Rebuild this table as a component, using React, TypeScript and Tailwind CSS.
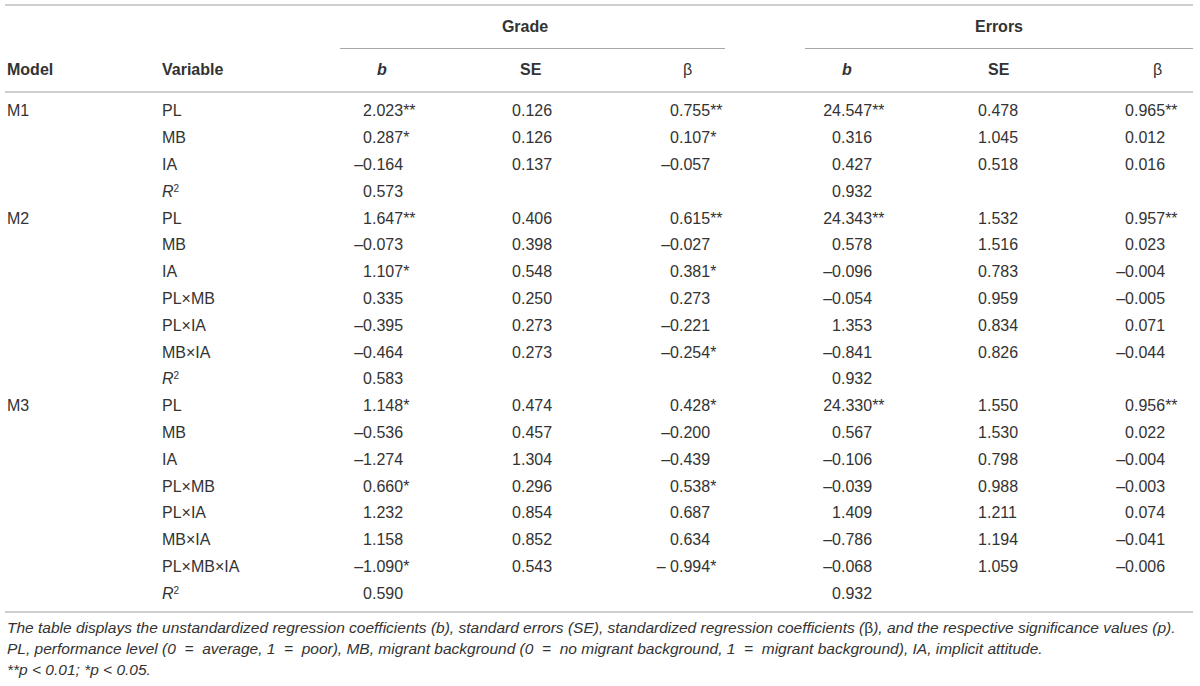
import React from 'react';

type Row = { model?: string; variable: React.ReactNode; g: string[]; e: string[] };

const R2 = (
  <span>
    <i>R</i>
    <sup className="text-[10px]">2</sup>
  </span>
);

const rows: Row[] = [
  { model: 'M1', variable: 'PL', g: ['2.023**', '0.126', '0.755**'], e: ['24.547**', '0.478', '0.965**'] },
  { variable: 'MB', g: ['0.287*', '0.126', '0.107*'], e: ['0.316', '1.045', '0.012'] },
  { variable: 'IA', g: ['–0.164', '0.137', '–0.057'], e: ['0.427', '0.518', '0.016'] },
  { variable: R2, g: ['0.573', '', ''], e: ['0.932', '', ''] },
  { model: 'M2', variable: 'PL', g: ['1.647**', '0.406', '0.615**'], e: ['24.343**', '1.532', '0.957**'] },
  { variable: 'MB', g: ['–0.073', '0.398', '–0.027'], e: ['0.578', '1.516', '0.023'] },
  { variable: 'IA', g: ['1.107*', '0.548', '0.381*'], e: ['–0.096', '0.783', '–0.004'] },
  { variable: 'PL×MB', g: ['0.335', '0.250', '0.273'], e: ['–0.054', '0.959', '–0.005'] },
  { variable: 'PL×IA', g: ['–0.395', '0.273', '–0.221'], e: ['1.353', '0.834', '0.071'] },
  { variable: 'MB×IA', g: ['–0.464', '0.273', '–0.254*'], e: ['–0.841', '0.826', '–0.044'] },
  { variable: R2, g: ['0.583', '', ''], e: ['0.932', '', ''] },
  { model: 'M3', variable: 'PL', g: ['1.148*', '0.474', '0.428*'], e: ['24.330**', '1.550', '0.956**'] },
  { variable: 'MB', g: ['–0.536', '0.457', '–0.200'], e: ['0.567', '1.530', '0.022'] },
  { variable: 'IA', g: ['–1.274', '1.304', '–0.439'], e: ['–0.106', '0.798', '–0.004'] },
  { variable: 'PL×MB', g: ['0.660*', '0.296', '0.538*'], e: ['–0.039', '0.988', '–0.003'] },
  { variable: 'PL×IA', g: ['1.232', '0.854', '0.687'], e: ['1.409', '1.211', '0.074'] },
  { variable: 'MB×IA', g: ['1.158', '0.852', '0.634'], e: ['–0.786', '1.194', '–0.041'] },
  { variable: 'PL×MB×IA', g: ['–1.090*', '0.543', '– 0.994*'], e: ['–0.068', '1.059', '–0.006'] },
  { variable: R2, g: ['0.590', '', ''], e: ['0.932', '', ''] },
];

const grid = 'grid grid-cols-[150px_185px_110px_150px_125px_80px_110px_150px_128px]';

// decimal-aligned number: integer part sits in a fixed right-aligned box
function Num({ v, w }: { v: string; w: string }) {
  if (!v) return <div />;
  const i = v.indexOf('.');
  return (
    <div className="flex items-center whitespace-pre">
      <span className={`${w} text-right`}>{v.slice(0, i)}</span>
      <span>{v.slice(i)}</span>
    </div>
  );
}

export default function App() {
  return (
    <div
      className="bg-white text-[#333] px-[5px] pt-[4px]"
      style={{ fontFamily: '"Liberation Sans", Arial, sans-serif' }}
    >
      <div className="w-[1188px] border-t-2 border-[#cfcfcf] text-[16px]">
        {/* group headers */}
        <div className={`${grid} h-[43px] font-bold`}>
          <div className="col-start-3 col-span-3 border-b border-[#a8a8a8] flex items-center justify-center pr-[15px]">
            Grade
          </div>
          <div className="col-start-7 col-span-3 border-b border-[#a8a8a8] flex items-center justify-center">
            Errors
          </div>
        </div>

        {/* column headers */}
        <div className={`${grid} h-[44px] items-center font-bold border-b-2 border-[#cfcfcf]`}>
          <div className="pl-[2px]">Model</div>
          <div className="pl-[7px]">Variable</div>
          <div className="pl-[37px] italic">b</div>
          <div className="pl-[70px]">SE</div>
          <div className="pl-[83px] font-normal">β</div>
          <div />
          <div className="pl-[37px] italic">b</div>
          <div className="pl-[73px]">SE</div>
          <div className="pl-[88px] font-normal">β</div>
        </div>

        {/* body */}
        <div className="pt-[5px] pb-[4px] border-b-2 border-[#cfcfcf]">
          {rows.map((r, k) => (
            <div key={k} className={`${grid} h-[26.8px] items-center`}>
              <div className="pl-[2px]">{r.model ?? ''}</div>
              <div className="pl-[7px]">{r.variable}</div>
              <Num v={r.g[0]} w="w-[32px]" />
              <Num v={r.g[1]} w="w-[71px]" />
              <Num v={r.g[2]} w="w-[79px]" />
              <div />
              <Num v={r.e[0]} w="w-[36px]" />
              <Num v={r.e[1]} w="w-[72px]" />
              <Num v={r.e[2]} w="w-[69px]" />
            </div>
          ))}
        </div>

        {/* note */}
        <div className="pt-[4px] italic text-[15.5px] leading-[21px] pl-[2px]">
          <p>
            The table displays the unstandardized regression coefficients (b), standard errors (SE), standardized
            regression coefficients (<span className="not-italic">β</span>), and the respective significance values (p).
          </p>
          <p>
            PL, performance level (0&nbsp; = &nbsp;average, 1&nbsp; = &nbsp;poor), MB, migrant background (0&nbsp; = &nbsp;no
            migrant background, 1&nbsp; = &nbsp;migrant background), IA, implicit attitude.
          </p>
          <p>**p &lt; 0.01; *p &lt; 0.05.</p>
        </div>
      </div>
    </div>
  );
}
